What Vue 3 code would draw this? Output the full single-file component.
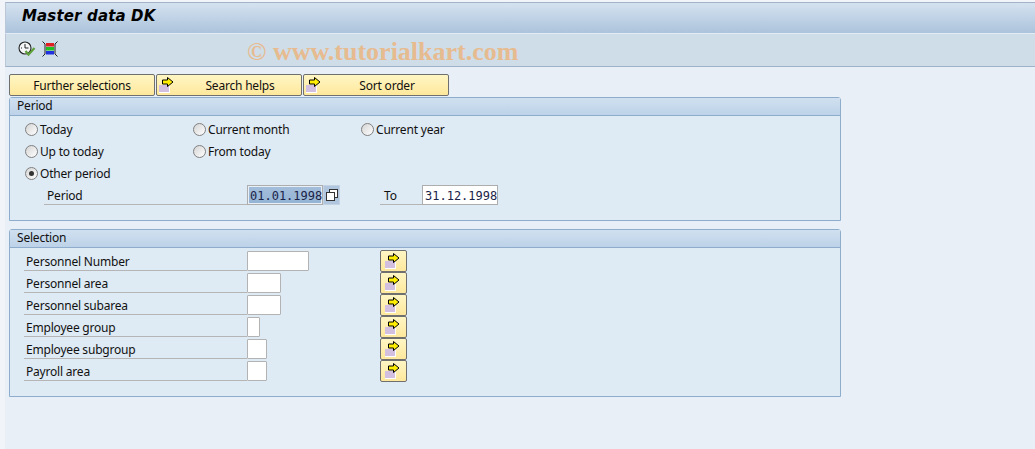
<script setup>
const radioRows = [
  [{ label: 'Today' }, { label: 'Current month' }, { label: 'Current year' }],
  [{ label: 'Up to today' }, { label: 'From today' }],
  [{ label: 'Other period', checked: true }]
]

const selectionRows = [
  { label: 'Personnel Number', width: 62 },
  { label: 'Personnel area', width: 34 },
  { label: 'Personnel subarea', width: 34 },
  { label: 'Employee group', width: 13 },
  { label: 'Employee subgroup', width: 20 },
  { label: 'Payroll area', width: 20 }
]

const actions = [
  { label: 'Further selections' },
  { label: 'Search helps', icon: true },
  { label: 'Sort order', icon: true }
]
</script>

<template>
  <div class="screen">
    <div class="title-bar">Master data DK</div>
    <div class="toolbar">
      <svg class="tool-icon" width="18" height="16" viewBox="0 0 18 16">
        <circle cx="7" cy="7" r="6" fill="#f4f6f8" stroke="#222" stroke-width="1.1" />
        <path d="M7 3v4h3.5M3 7h1" fill="none" stroke="#222" stroke-width="1" />
        <path d="M7.5 10l3 3.5L16.5 7" fill="none" stroke="#5f9f3a" stroke-width="2.2" />
      </svg>
      <svg class="tool-icon" width="16" height="16" viewBox="0 0 16 16">
        <path d="M0.5 0.5L3 3v10l-2.5 2.5M15.5 0.5L13 3v10l2.5 2.5" fill="none" stroke="#222" stroke-width="1" />
        <rect x="4" y="2" width="8" height="3.5" fill="#e02020" />
        <rect x="4" y="6" width="8" height="3.5" fill="#20c020" />
        <rect x="4" y="10" width="8" height="3.5" fill="#2030e0" />
      </svg>
      <span class="watermark">© www.tutorialkart.com</span>
    </div>

    <main class="content">
      <div class="actions">
        <button v-for="a in actions" :key="a.label" class="action" :class="{ 'has-icon': a.icon }">
          <svg v-if="a.icon" class="action-icon" width="15" height="16" viewBox="0 0 15 16">
            <rect x="0" y="8" width="10" height="7" fill="#d3bfe0" />
            <path d="M0 15.5h11M10.5 8v8" stroke="#fff" />
            <path d="M3.5 3h5V0.5L14 5l-5.5 4.5V7h-5z" fill="#ffee00" stroke="#000" />
          </svg>
          {{ a.label }}
        </button>
      </div>

      <section class="panel period">
        <h2 class="panel-head">Period</h2>
        <div class="panel-body">
          <div v-for="(row, i) in radioRows" :key="i" class="radio-row">
            <label v-for="r in row" :key="r.label" class="radio">
              <span class="dot" :class="{ checked: r.checked }"></span>{{ r.label }}
            </label>
          </div>
          <div class="date-row">
            <span class="field-label date-label">Period</span>
            <span class="date selected">01.01.1998</span>
            <span class="f4">
              <svg width="12" height="12" viewBox="0 0 12 12">
                <rect x="3.5" y="0.5" width="8" height="8" fill="#fff" stroke="#333" />
                <rect x="0.5" y="3.5" width="8" height="8" fill="#fff" stroke="#333" />
              </svg>
            </span>
            <span class="field-label to-label">To</span>
            <span class="date">31.12.1998</span>
          </div>
        </div>
      </section>

      <section class="panel selection">
        <h2 class="panel-head">Selection</h2>
        <div class="panel-body">
          <div v-for="row in selectionRows" :key="row.label" class="sel-row">
            <span class="field-label sel-label">{{ row.label }}</span>
            <span class="sel-cell"><span class="input" :style="{ width: row.width + 'px' }"></span></span>
            <button class="more">
              <svg width="15" height="16" viewBox="0 0 15 16">
                <rect x="0" y="8" width="10" height="7" fill="#d3bfe0" />
                <path d="M0 15.5h11M10.5 8v8" stroke="#fff" />
                <path d="M3.5 3h5V0.5L14 5l-5.5 4.5V7h-5z" fill="#ffee00" stroke="#000" />
              </svg>
            </button>
          </div>
        </div>
      </section>
    </main>
  </div>
</template>

<style>
html, body {
  margin: 0;
  background: #f1f5fa;
  overflow: hidden;
}
</style>

<style scoped>
.screen {
  height: 449px;
  padding: 2px 0 0 5px;
  box-sizing: border-box;
  font-family: "Noto Sans", sans-serif;
  font-size: 12px;
  letter-spacing: -0.2px;
  color: #111;
  display: flex;
  flex-direction: column;
}

.title-bar {
  height: 32px;
  box-sizing: border-box;
  border-top: 1px solid #a3b2c6;
  border-bottom: 1px solid #e3ebf3;
  border-left: 1px solid #b9c7d7;
  background: linear-gradient(#d5e2f0, #abc3db);
  padding-left: 16px;
  font: italic bold 15px/27px "DejaVu Sans", sans-serif;
  letter-spacing: 0.15px;
  color: #000;
}

.toolbar {
  height: 33px;
  box-sizing: border-box;
  background: #cfdde8;
  border-bottom: 1px solid #9fb3c8;
  border-left: 1px solid #b9c7d7;
  display: flex;
  align-items: flex-start;
  padding: 7px 0 0 12px;
  gap: 6px;
  position: relative;
}

.tool-icon {
  flex: none;
}

.watermark {
  position: absolute;
  left: 241px;
  top: 3px;
  font: bold 26px/30px "Liberation Serif", serif;
  letter-spacing: 0;
  color: #e7bb90;
  white-space: nowrap;
}

.content {
  flex: 1;
  background: #e8eff7;
  padding: 7px 0 0 4px;
}

.actions {
  display: flex;
  gap: 1px;
  height: 22px;
}

.action {
  width: 146px;
  height: 22px;
  box-sizing: border-box;
  border: 1px solid #6f6f6f;
  border-radius: 2px;
  background: linear-gradient(#fff6c4, #ffe89c);
  font: 12px "Noto Sans", sans-serif;
  letter-spacing: -0.2px;
  color: #111;
  padding: 0;
  position: relative;
}

.action.has-icon {
  padding-left: 22px;
}

.action-icon {
  position: absolute;
  left: 2px;
  top: 2px;
}

.panel {
  width: 832px;
  box-sizing: border-box;
  border: 1px solid #8eaccb;
  border-top-left-radius: 3px;
  border-top-right-radius: 3px;
  background: #deeaf4;
}

.period {
  margin-top: 1px;
  height: 124px;
}

.selection {
  margin-top: 8px;
  height: 168px;
}

.panel-head {
  margin: 0;
  height: 18px;
  box-sizing: border-box;
  border-bottom: 1px solid #8eaccb;
  background: linear-gradient(#d0e0f0, #bdd2e8);
  padding-left: 7px;
  font: 12px/15px "Noto Sans", sans-serif;
  letter-spacing: -0.2px;
  color: #111;
}

.period .panel-body {
  padding: 2px 0 0 15px;
}

.selection .panel-body {
  padding: 2px 0 0 14px;
}

.radio-row {
  display: flex;
  height: 22px;
  align-items: center;
}

.radio {
  width: 168px;
  display: flex;
  align-items: center;
}

.dot {
  width: 13px;
  height: 13px;
  box-sizing: border-box;
  border: 1px solid #808080;
  border-radius: 50%;
  background: linear-gradient(135deg, #d4d4d4, #fff);
  margin-right: 2px;
  display: flex;
  align-items: center;
  justify-content: center;
}

.dot.checked::after {
  content: "";
  width: 5px;
  height: 5px;
  border-radius: 50%;
  background: #333;
}

.date-row {
  display: flex;
  height: 22px;
  align-items: center;
}

.field-label {
  height: 21px;
  box-sizing: border-box;
  border-bottom: 1px solid #b5b5b5;
  line-height: 24px;
  align-self: flex-start;
}

.date-label {
  width: 203px;
  margin-left: 19px;
  padding-left: 3px;
}

.to-label {
  width: 42px;
  margin-left: 40px;
  padding-left: 4px;
}

.date {
  width: 76px;
  height: 20px;
  box-sizing: border-box;
  border: 1px solid #adadad;
  background: #fff;
  font: 12px/20px "DejaVu Sans Mono", monospace;
  letter-spacing: 0;
  color: #1a2348;
  padding-left: 2px;
}

.date.selected {
  background: linear-gradient(#a3bedb, #94b3d3);
  box-shadow: inset 0 0 0 1px #e8eff7;
}

.f4 {
  width: 17px;
  height: 20px;
  box-sizing: border-box;
  border: 1px solid #c4d3e3;
  background: #b0c6de;
  display: flex;
  align-items: center;
  justify-content: center;
}

.sel-row {
  display: flex;
  height: 22px;
  align-items: flex-start;
}

.sel-label {
  width: 223px;
  padding-left: 2px;
}

.sel-cell {
  width: 133px;
  display: block;
}

.input {
  display: block;
  height: 20px;
  margin-top: 1px;
  box-sizing: border-box;
  border: 1px solid #b3b3b3;
  background: #fff;
  border-radius: 1px;
}

.more {
  width: 27px;
  height: 22px;
  box-sizing: border-box;
  border: 1px solid #6f6f6f;
  border-radius: 2px;
  background: linear-gradient(#fff6c4, #ffe89c);
  padding: 2px 0 0 4px;
  display: flex;
  align-items: flex-start;
}
</style>
